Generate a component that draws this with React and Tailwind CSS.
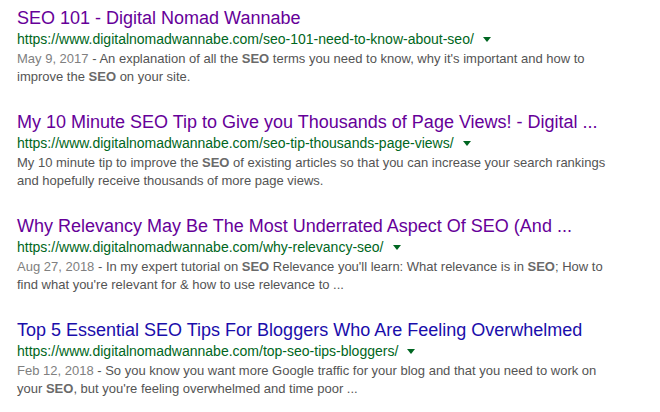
import React from 'react';

const results = [
  {
    title: 'SEO 101 - Digital Nomad Wannabe',
    visited: true,
    url: 'https://www.digitalnomadwannabe.com/seo-101-need-to-know-about-seo/',
    date: 'May 9, 2017',
    lines: [
      [' - An explanation of all the ', 'SEO', " terms you need to know, why it's important and how to"],
      ['improve the ', 'SEO', ' on your site.'],
    ],
  },
  {
    title: 'My 10 Minute SEO Tip to Give you Thousands of Page Views! - Digital ...',
    visited: true,
    url: 'https://www.digitalnomadwannabe.com/seo-tip-thousands-page-views/',
    date: null,
    lines: [
      ['My 10 minute tip to improve the ', 'SEO', ' of existing articles so that you can increase your search rankings'],
      ['and hopefully receive thousands of more page views.'],
    ],
  },
  {
    title: 'Why Relevancy May Be The Most Underrated Aspect Of SEO (And ...',
    visited: true,
    url: 'https://www.digitalnomadwannabe.com/why-relevancy-seo/',
    date: 'Aug 27, 2018',
    lines: [
      [' - In my expert tutorial on ', 'SEO', " Relevance you'll learn: What relevance is in ", 'SEO', '; How to'],
      ["find what you're relevant for & how to use relevance to ..."],
    ],
  },
  {
    title: 'Top 5 Essential SEO Tips For Bloggers Who Are Feeling Overwhelmed',
    visited: false,
    url: 'https://www.digitalnomadwannabe.com/top-seo-tips-bloggers/',
    date: 'Feb 12, 2018',
    lines: [
      [' - So you know you want more Google traffic for your blog and that you need to work on'],
      ['your ', 'SEO', ", but you're feeling overwhelmed and time poor ..."],
    ],
  },
];

// odd indexes in each line are the bolded query terms
function Line({ parts }) {
  return parts.map((p, i) =>
    i % 2 === 1 ? (
      <b key={i} className="font-bold text-[#6a6a6a]">{p}</b>
    ) : (
      <span key={i}>{p}</span>
    )
  );
}

export default function App() {
  return (
    <div
      className="w-[660px] h-[412px] bg-white pl-[17px] pt-[7px] overflow-hidden"
      style={{ fontFamily: '"Liberation Sans", Arial, sans-serif' }}
    >
      <div className="flex flex-col gap-[25px]">
        {results.map((r, idx) => (
          <div key={idx}>
            <a
              className={`block text-[18px] leading-[22px] whitespace-nowrap ${
                r.visited ? 'text-[#660099]' : 'text-[#1a0dab]'
              }`}
            >
              {r.title}
            </a>
            <div className="flex items-center text-[14px] leading-[21px] text-[#006621] whitespace-nowrap">
              <span>{r.url}</span>
              <span className="ml-[9px] mt-[-1px] w-0 h-0 border-l-[4px] border-r-[4px] border-t-[5px] border-l-transparent border-r-transparent border-t-[#006621]" />
            </div>
            <div className="text-[13px] leading-[18px] text-[#545454] whitespace-nowrap">
              <div>
                {r.date && <span className="text-[#808080]">{r.date}</span>}
                <Line parts={r.lines[0]} />
              </div>
              <div>
                <Line parts={r.lines[1]} />
              </div>
            </div>
          </div>
        ))}
      </div>
    </div>
  );
}
